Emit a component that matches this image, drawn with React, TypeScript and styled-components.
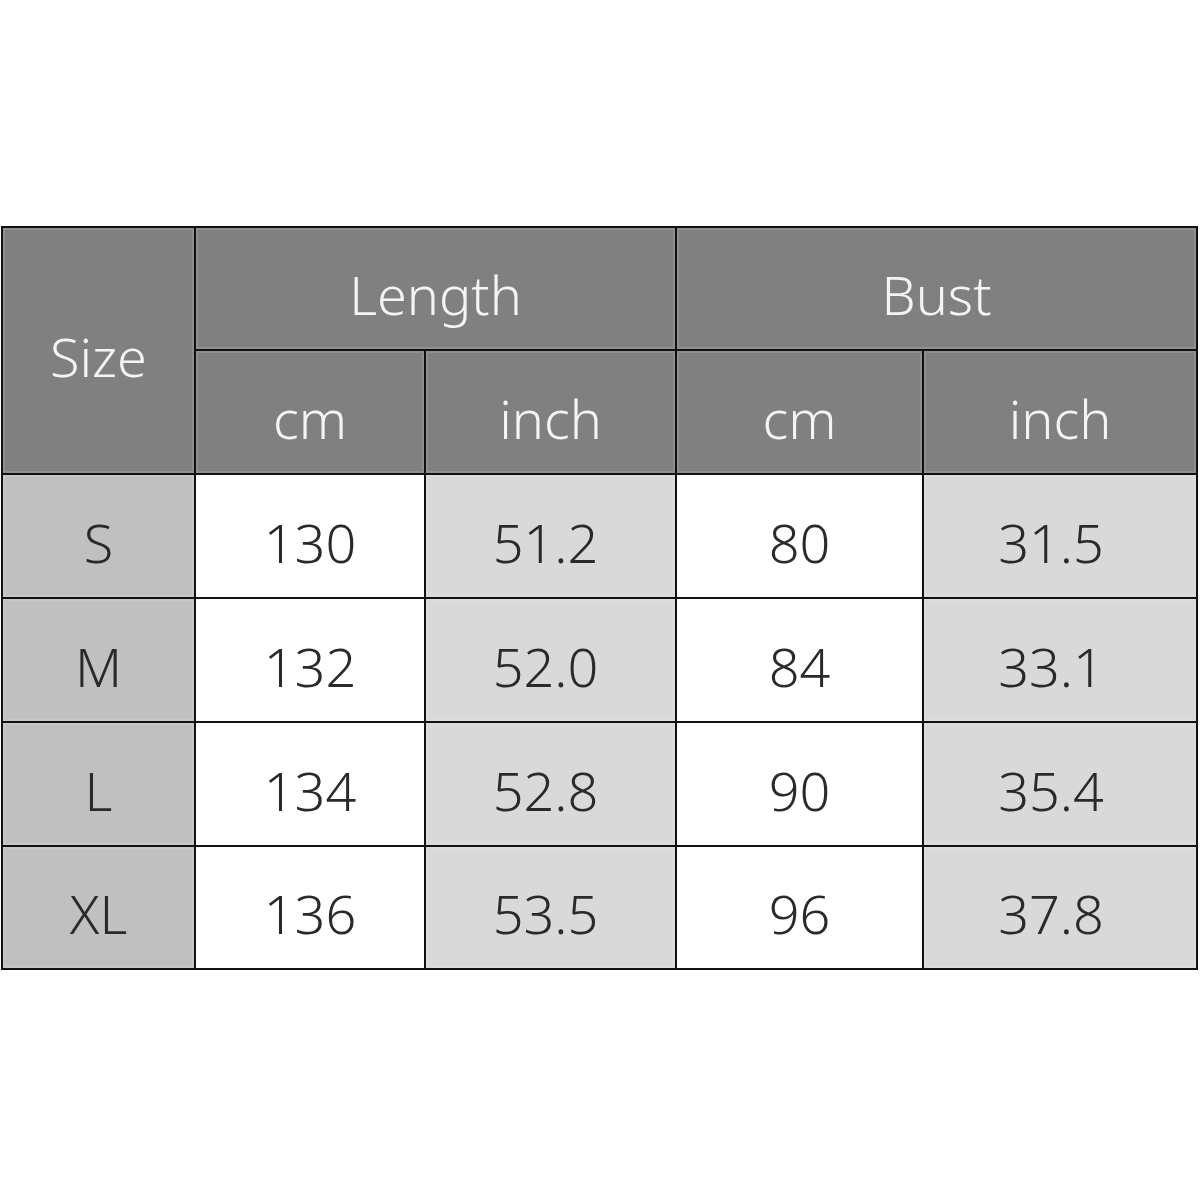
import React from "react";
import styled, { createGlobalStyle } from "styled-components";

const Global = createGlobalStyle`
  html, body { margin: 0; padding: 0; background: #ffffff; }
  body { font-family: "Noto Sans", "Liberation Sans", sans-serif; }
`;

const Page = styled.div`
  width: 1200px;
  height: 1200px;
  padding: 226px 0 0 1px;
  box-sizing: border-box;
`;

const Grid = styled.div`
  display: grid;
  width: 1197px;
  box-sizing: border-box;
  grid-template-columns: 191px 228px 249px 245px 272px;
  grid-template-rows: 121px 122px 122px 122px 122px 121px;
  gap: 2px;
  padding: 2px;
  background: #111111;
`;

type Tone = "head" | "size" | "cm" | "inch";

const fills: Record<Tone, string> = {
  head: "#808080",
  size: "#c0c0c0",
  cm: "#ffffff",
  inch: "#d9d9d9",
};

const Cell = styled.div<{ $tone: Tone; $col?: string; $row?: string; $shift?: number }>`
  display: flex;
  align-items: center;
  justify-content: center;
  box-sizing: border-box;
  padding-top: 11px;
  padding-right: ${(p) => (p.$shift ?? 0) * 2}px;
  background: ${(p) => fills[p.$tone]};
  color: ${(p) => (p.$tone === "head" ? "#f4f4f4" : "#2a2a2a")};
  font-size: 54px;
  font-weight: 300;
  line-height: 1;
  grid-column: ${(p) => p.$col ?? "auto"};
  grid-row: ${(p) => p.$row ?? "auto"};
  box-shadow: inset 0 0 0 2px rgba(255, 255, 255, 0.12);
`;

const rows = [
  ["S", "130", "51.2", "80", "31.5"],
  ["M", "132", "52.0", "84", "33.1"],
  ["L", "134", "52.8", "90", "35.4"],
  ["XL", "136", "53.5", "96", "37.8"],
];

const tones: Tone[] = ["size", "cm", "inch", "cm", "inch"];
const shifts = [0, -1, 5, 0, 9];

export default function App() {
  return (
    <>
      <Global />
      <Page>
        <Grid>
          <Cell $tone="head" $col="1" $row="1 / span 2">Size</Cell>
          <Cell $tone="head" $col="2 / span 2" $row="1">Length</Cell>
          <Cell $tone="head" $col="4 / span 2" $row="1">Bust</Cell>
          <Cell $tone="head" $col="2" $row="2">cm</Cell>
          <Cell $tone="head" $col="3" $row="2">inch</Cell>
          <Cell $tone="head" $col="4" $row="2">cm</Cell>
          <Cell $tone="head" $col="5" $row="2">inch</Cell>
          {rows.map((r) =>
            r.map((v, i) => (
              <Cell key={r[0] + i} $tone={tones[i]} $shift={shifts[i]}>
                {v}
              </Cell>
            ))
          )}
        </Grid>
      </Page>
    </>
  );
}
